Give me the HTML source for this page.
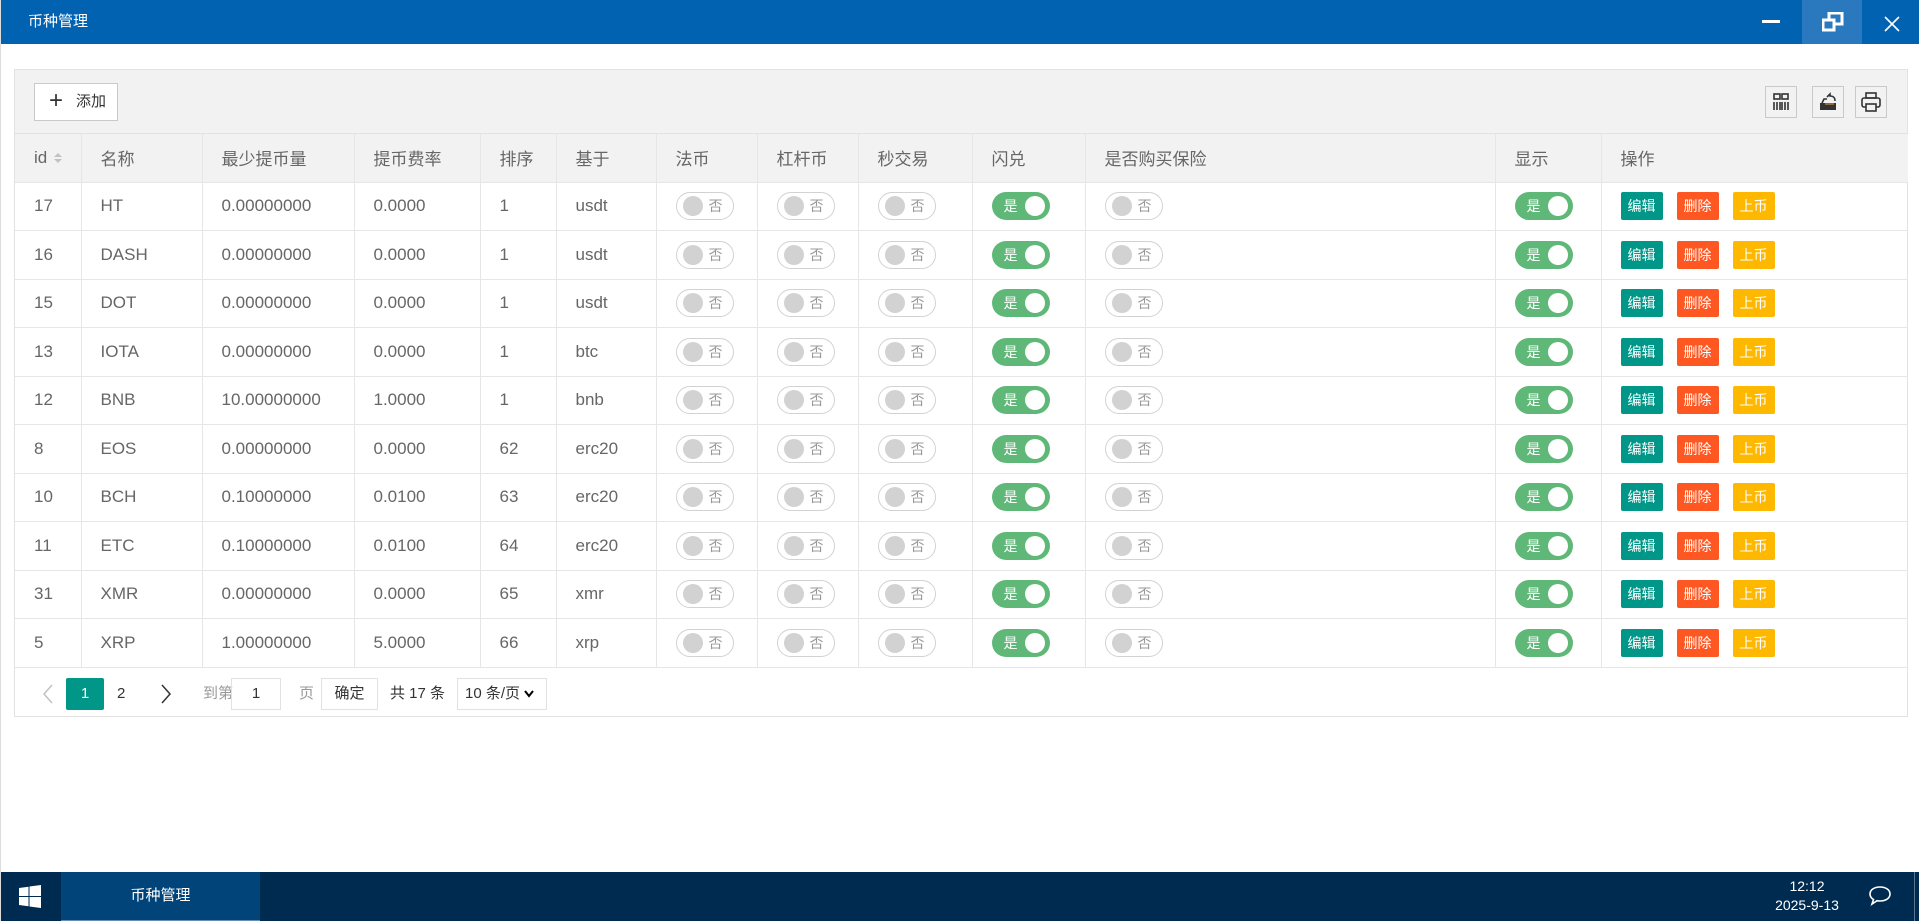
<!DOCTYPE html>
<html><head><meta charset="utf-8">
<style>
*{box-sizing:border-box;margin:0;padding:0}
body{width:1919px;height:921px;overflow:hidden;background:#fff;font-family:"Liberation Sans","Noto Sans CJK SC",sans-serif;position:relative;border-left:1px solid #ddd}
.title{position:absolute;left:0;top:0;width:1919px;height:44px;background:#0062b1;color:#fff;font-size:15px;line-height:44px;padding-left:27px}
.restore{position:absolute;left:1801px;top:0;width:60px;height:44px;background:#2a79be}
.panel{position:absolute;left:13px;top:69px;width:1894px;height:648px;border:1px solid #e2e2e2;background:#fff}
.tool{height:64px;background:#f2f2f2;border-bottom:1px solid #e2e2e2;position:relative}
.addbtn{position:absolute;left:19px;top:13px;width:84px;height:38px;border:1px solid #c9c9c9;background:#fff;font-size:15px;color:#333;line-height:36px;padding-left:41px}
.addbtn b{font-weight:normal;font-size:24px;position:absolute;left:14px;top:-1px}
.ib{position:absolute;top:16px;width:32px;height:32px;border:1px solid #c9c9c9;background:#f2f2f2}
table{border-collapse:collapse;position:absolute;left:0;top:64px;width:1893px;table-layout:fixed}
td,th{border-bottom:1px solid #e6e6e6;border-right:1px solid #e6e6e6;text-align:left;font-weight:normal;font-size:17px;color:#666;padding-left:19px;white-space:nowrap}
th{height:48px;background:#f2f2f2}
td{height:48.5px}
tr td:last-child,tr th:last-child{border-right:none}
.off,.on{display:inline-block;width:58px;height:28px;border-radius:15px;position:relative;vertical-align:middle;font-size:14px;line-height:26px;font-style:normal}
.off{border:1px solid #d2d2d2;background:#fff;color:#999}
.off::before{content:"";position:absolute;left:6px;top:3px;width:20px;height:20px;border-radius:50%;background:#d2d2d2}
.off span{position:absolute;left:32px}
.on{background:#5fb878;color:#fff}
.on::after{content:"";position:absolute;right:5px;top:4px;width:20px;height:20px;border-radius:50%;background:#fff}
.on span{position:absolute;left:12px;top:1px}
.b{display:inline-block;width:42px;height:28px;color:#fff;font-size:14px;line-height:28px;text-align:center;border-radius:2px;margin-right:14px;vertical-align:middle}
.pg{position:absolute;top:608px;left:0;font-size:15px;color:#333}
.pg div{position:absolute;white-space:nowrap}
.task{position:absolute;left:0;top:872px;width:1919px;height:49px;background:#002b50}
</style></head><body>
<div class="title">币种管理</div>
<svg style="position:absolute;left:1760px;top:15px" width="20" height="10"><rect x="1" y="5" width="18" height="3" fill="#fff"/></svg>
<div class="restore"></div>
<svg style="position:absolute;left:1821px;top:12px" width="22" height="20"><rect x="7" y="1" width="13" height="11" fill="none" stroke="#fff" stroke-width="3"/><rect x="1" y="8" width="11" height="10" fill="#2a79be" stroke="#fff" stroke-width="3"/></svg>
<svg style="position:absolute;left:1883px;top:16px" width="16" height="16"><path d="M1 1L15 15M15 1L1 15" stroke="#fff" stroke-width="1.6"/></svg>

<div class="panel">
<div class="tool">
<div class="addbtn"><b>+</b>添加</div>
<div class="ib" style="left:1750px"><svg width="30" height="30"><g fill="none" stroke="#333" stroke-width="1.6"><rect x="8" y="7" width="6" height="5"/><rect x="16" y="7" width="6" height="5"/><path d="M8 15v8M11 15v8M16 15v8M19 15v8M22 15v8M14 15v8"/></g></svg></div>
<div class="ib" style="left:1797px"><svg width="30" height="30"><path d="M7 16h16v7H7z" fill="#333"/><path d="M9 16l2-4h3M14 10l3-3v2c3 0 5 1 5 5" fill="none" stroke="#333" stroke-width="1.6"/><path d="M12 17h9" stroke="#e8a33c" stroke-width="1"/></svg></div>
<div class="ib" style="left:1840px"><svg width="30" height="30"><g fill="none" stroke="#333" stroke-width="1.6"><rect x="10" y="6" width="10" height="5"/><rect x="6" y="11" width="18" height="9" rx="2"/><rect x="10" y="17" width="10" height="7" fill="#f2f2f2"/></g></svg></div>
</div>
<table>
<colgroup><col style="width:66px"><col style="width:121px"><col style="width:152px"><col style="width:126px"><col style="width:76px"><col style="width:100px"><col style="width:101px"><col style="width:101px"><col style="width:114px"><col style="width:113px"><col style="width:410px"><col style="width:106px"><col></colgroup>
<tr><th>id <svg width="12" height="14" style="vertical-align:middle"><path d="M2 6l4-4 4 4zM2 8l4 4 4-4z" fill="#c2c2c2"/></svg></th><th>名称</th><th>最少提币量</th><th>提币费率</th><th>排序</th><th>基于</th><th>法币</th><th>杠杆币</th><th>秒交易</th><th>闪兑</th><th>是否购买保险</th><th>显示</th><th>操作</th></tr>
<tbody>
<tr><td>17</td><td>HT</td><td>0.00000000</td><td>0.0000</td><td>1</td><td>usdt</td><td><span class="off"><span>否</span></span></td><td><span class="off"><span>否</span></span></td><td><span class="off"><span>否</span></span></td><td><span class="on"><span>是</span></span></td><td><span class="off"><span>否</span></span></td><td><span class="on"><span>是</span></span></td><td><span class="b" style="background:#009688">编辑</span><span class="b" style="background:#ff5722">删除</span><span class="b" style="background:#ffb800">上币</span></td></tr>
<tr><td>16</td><td>DASH</td><td>0.00000000</td><td>0.0000</td><td>1</td><td>usdt</td><td><span class="off"><span>否</span></span></td><td><span class="off"><span>否</span></span></td><td><span class="off"><span>否</span></span></td><td><span class="on"><span>是</span></span></td><td><span class="off"><span>否</span></span></td><td><span class="on"><span>是</span></span></td><td><span class="b" style="background:#009688">编辑</span><span class="b" style="background:#ff5722">删除</span><span class="b" style="background:#ffb800">上币</span></td></tr>
<tr><td>15</td><td>DOT</td><td>0.00000000</td><td>0.0000</td><td>1</td><td>usdt</td><td><span class="off"><span>否</span></span></td><td><span class="off"><span>否</span></span></td><td><span class="off"><span>否</span></span></td><td><span class="on"><span>是</span></span></td><td><span class="off"><span>否</span></span></td><td><span class="on"><span>是</span></span></td><td><span class="b" style="background:#009688">编辑</span><span class="b" style="background:#ff5722">删除</span><span class="b" style="background:#ffb800">上币</span></td></tr>
<tr><td>13</td><td>IOTA</td><td>0.00000000</td><td>0.0000</td><td>1</td><td>btc</td><td><span class="off"><span>否</span></span></td><td><span class="off"><span>否</span></span></td><td><span class="off"><span>否</span></span></td><td><span class="on"><span>是</span></span></td><td><span class="off"><span>否</span></span></td><td><span class="on"><span>是</span></span></td><td><span class="b" style="background:#009688">编辑</span><span class="b" style="background:#ff5722">删除</span><span class="b" style="background:#ffb800">上币</span></td></tr>
<tr><td>12</td><td>BNB</td><td>10.00000000</td><td>1.0000</td><td>1</td><td>bnb</td><td><span class="off"><span>否</span></span></td><td><span class="off"><span>否</span></span></td><td><span class="off"><span>否</span></span></td><td><span class="on"><span>是</span></span></td><td><span class="off"><span>否</span></span></td><td><span class="on"><span>是</span></span></td><td><span class="b" style="background:#009688">编辑</span><span class="b" style="background:#ff5722">删除</span><span class="b" style="background:#ffb800">上币</span></td></tr>
<tr><td>8</td><td>EOS</td><td>0.00000000</td><td>0.0000</td><td>62</td><td>erc20</td><td><span class="off"><span>否</span></span></td><td><span class="off"><span>否</span></span></td><td><span class="off"><span>否</span></span></td><td><span class="on"><span>是</span></span></td><td><span class="off"><span>否</span></span></td><td><span class="on"><span>是</span></span></td><td><span class="b" style="background:#009688">编辑</span><span class="b" style="background:#ff5722">删除</span><span class="b" style="background:#ffb800">上币</span></td></tr>
<tr><td>10</td><td>BCH</td><td>0.10000000</td><td>0.0100</td><td>63</td><td>erc20</td><td><span class="off"><span>否</span></span></td><td><span class="off"><span>否</span></span></td><td><span class="off"><span>否</span></span></td><td><span class="on"><span>是</span></span></td><td><span class="off"><span>否</span></span></td><td><span class="on"><span>是</span></span></td><td><span class="b" style="background:#009688">编辑</span><span class="b" style="background:#ff5722">删除</span><span class="b" style="background:#ffb800">上币</span></td></tr>
<tr><td>11</td><td>ETC</td><td>0.10000000</td><td>0.0100</td><td>64</td><td>erc20</td><td><span class="off"><span>否</span></span></td><td><span class="off"><span>否</span></span></td><td><span class="off"><span>否</span></span></td><td><span class="on"><span>是</span></span></td><td><span class="off"><span>否</span></span></td><td><span class="on"><span>是</span></span></td><td><span class="b" style="background:#009688">编辑</span><span class="b" style="background:#ff5722">删除</span><span class="b" style="background:#ffb800">上币</span></td></tr>
<tr><td>31</td><td>XMR</td><td>0.00000000</td><td>0.0000</td><td>65</td><td>xmr</td><td><span class="off"><span>否</span></span></td><td><span class="off"><span>否</span></span></td><td><span class="off"><span>否</span></span></td><td><span class="on"><span>是</span></span></td><td><span class="off"><span>否</span></span></td><td><span class="on"><span>是</span></span></td><td><span class="b" style="background:#009688">编辑</span><span class="b" style="background:#ff5722">删除</span><span class="b" style="background:#ffb800">上币</span></td></tr>
<tr><td>5</td><td>XRP</td><td>1.00000000</td><td>5.0000</td><td>66</td><td>xrp</td><td><span class="off"><span>否</span></span></td><td><span class="off"><span>否</span></span></td><td><span class="off"><span>否</span></span></td><td><span class="on"><span>是</span></span></td><td><span class="off"><span>否</span></span></td><td><span class="on"><span>是</span></span></td><td><span class="b" style="background:#009688">编辑</span><span class="b" style="background:#ff5722">删除</span><span class="b" style="background:#ffb800">上币</span></td></tr>
</tbody></table>
<div class="pg">
<div style="left:26px;top:4px"><svg width="14" height="24"><path d="M11 3L3 12l8 9" fill="none" stroke="#c2c2c2" stroke-width="1.5"/></svg></div>
<div style="left:51px;top:0;width:38px;height:32px;background:#009688;color:#fff;text-align:center;line-height:32px;border-radius:2px">1</div>
<div style="left:102px;top:0;line-height:32px">2</div>
<div style="left:144px;top:4px"><svg width="14" height="24"><path d="M3 3l8 9-8 9" fill="none" stroke="#333" stroke-width="1.5"/></svg></div>
<div style="left:188px;top:0;line-height:32px;color:#999">到第</div>
<div style="left:216px;top:0;width:50px;height:32px;border:1px solid #e2e2e2;text-align:center;line-height:30px">1</div>
<div style="left:284px;top:0;line-height:32px;color:#999">页</div>
<div style="left:306px;top:0;width:57px;height:32px;border:1px solid #e2e2e2;text-align:center;line-height:30px;font-size:15px">确定</div>
<div style="left:375px;top:0;line-height:32px">共 17 条</div>
<div style="left:442px;top:0;width:90px;height:32px;border:1px solid #e2e2e2;line-height:30px;padding-left:7px">10 条/页 <svg width="10" height="8"><path d="M1 1l4 5 4-5" fill="none" stroke="#000" stroke-width="2"/></svg></div>
</div>
</div>

<div class="task">
<svg style="position:absolute;left:18px;top:13px" width="22" height="23"><path d="M0 3l9.5-1.3V11H0zM10.5 1.5L22 0v11H10.5zM0 12h9.5v9.3L0 20zM10.5 12H22v11l-11.5-1.5z" fill="#fff"/></svg>
<div style="position:absolute;left:60px;top:0;width:199px;height:49px;background:#00447a;color:#fff;font-size:15px;text-align:center;line-height:47px;border-bottom:1px solid #6b8db0">币种管理</div>
<div style="position:absolute;left:1770px;top:5px;width:72px;color:#fff;font-size:14px;text-align:center;line-height:19px">12:12<br>2025-9-13</div>
<svg style="position:absolute;left:1866px;top:11px" width="26" height="26"><path d="M13 4c6 0 10 3 10 7s-4 7-10 7c-1 0-2 0-3-.3L5 21l1.5-4.5C4 15 3 13 3 11c0-4 4-7 10-7z" fill="none" stroke="#fff" stroke-width="1.6"/></svg>
<div style="position:absolute;left:1913px;top:0;width:1px;height:49px;background:#5a7590"></div>
</div>
</body></html>
